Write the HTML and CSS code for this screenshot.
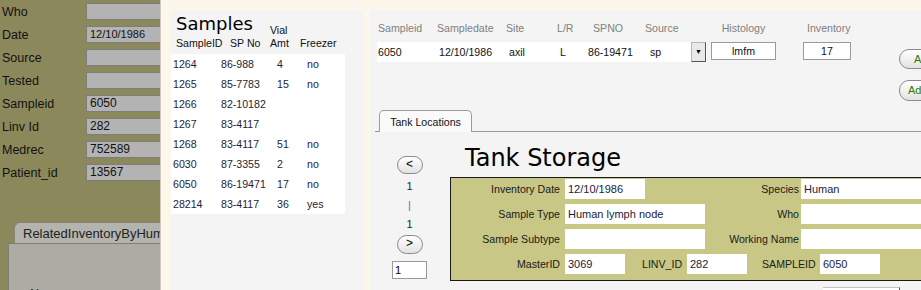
FILE: index.html
```html
<!DOCTYPE html>
<html lang="en">
<head>
    <meta charset="UTF-8">
    <title>Sample Inventory</title>
    <link rel="stylesheet" href="styles.css">
</head>
<body>

    <div class="left">
        <div class="left-form">
            <span class="lbl">Who</span><div class="fld"></div>
            <span class="lbl">Date</span><div class="fld small">12/10/1986</div>
            <span class="lbl">Source</span><div class="fld"></div>
            <span class="lbl">Tested</span><div class="fld"></div>
            <span class="lbl">Sampleid</span><div class="fld">6050</div>
            <span class="lbl">Linv Id</span><div class="fld">282</div>
            <span class="lbl">Medrec</span><div class="fld">752589</div>
            <span class="lbl">Patient_id</span><div class="fld">13567</div>
        </div>
        <div class="left-tab">RelatedInventoryByHumanID</div>
        <div class="left-tabpanel">Name</div>
    </div>

    <div class="main">
        <div class="samples">
            <div class="s-head">
                <div class="s-title">Samples</div>
                <div class="s-vial">Vial</div>
                <div class="s-col">SampleID</div>
                <div class="s-col">SP No</div>
                <div class="s-col">Amt</div>
                <div class="s-col">Freezer</div>
            </div>
            <div class="s-rows">
                <span>1264</span><span>86-988</span><span>4</span><span>no</span>
                <span>1265</span><span>85-7783</span><span>15</span><span>no</span>
                <span>1266</span><span>82-10182</span><span></span><span></span>
                <span>1267</span><span>83-4117</span><span></span><span></span>
                <span>1268</span><span>83-4117</span><span>51</span><span>no</span>
                <span>6030</span><span>87-3355</span><span>2</span><span>no</span>
                <span>6050</span><span>86-19471</span><span>17</span><span>no</span>
                <span>28214</span><span>83-4117</span><span>36</span><span>yes</span>
            </div>
        </div>

        <div class="right">
            <div class="rec-top">
                <div class="rec">
                    <div class="h p1">Sampleid</div>
                    <div class="h">Sampledate</div>
                    <div class="h">Site</div>
                    <div class="h p1">L/R</div>
                    <div class="h p5">SPNO</div>
                    <div class="h">Source</div>
                    <div class="h center">Histology</div>
                    <div></div>
                    <div class="h inv-h">Inventory</div>

                    <div class="cell p1">6050</div>
                    <div class="cell p2">12/10/1986</div>
                    <div class="cell p3">axil</div>
                    <div class="cell p4">L</div>
                    <div class="cell">86-19471</div>
                    <div class="cell src"><span class="p5">sp</span><span class="drop">&#9660;</span></div>
                    <div class="box histo">lmfm</div>
                    <div></div>
                    <div class="box">17</div>
                </div>
                <div class="btns">
                    <div class="pill add1">Add Sample</div>
                    <div class="pill add2">Add Inventory</div>
                </div>
            </div>

            <div class="tabs">
                <div class="tab">Tank Locations</div>
            </div>

            <div class="tank">
                <div class="nav">
                    <div class="pill nav-btn">&lt;</div>
                    <div class="nav-num first">1</div>
                    <div class="nav-num bar">|</div>
                    <div class="nav-num">1</div>
                    <div class="pill nav-btn next">&gt;</div>
                    <div class="nav-input">1</div>
                </div>
                <div class="tank-main">
                    <h1>Tank Storage</h1>
                    <div class="tank-box">
                        <span class="tl">Inventory Date</span>
                        <div class="tin w80">12/10/1986</div>
                        <span class="tl2">Species</span>
                        <div class="tin wide">Human</div>

                        <span class="tl">Sample Type</span>
                        <div class="tin">Human lymph node</div>
                        <span class="tl2">Who</span>
                        <div class="tin wide"></div>

                        <span class="tl">Sample Subtype</span>
                        <div class="tin"></div>
                        <span class="tl2">Working Name</span>
                        <div class="tin wide"></div>

                        <span class="tl">MasterID</span>
                        <div class="ids">
                            <div class="tin w60">3069</div>
                            <span class="id-lbl linv">LINV_ID</span>
                            <div class="tin w60">282</div>
                            <span class="id-lbl sid">SAMPLEID</span>
                            <div class="tin w60">6050</div>
                        </div>
                    </div>
                    <div class="stub"></div>
                </div>
            </div>
        </div>
    </div>

</body>
</html>
```

FILE: styles.css
```css
body {
    margin: 0;
    width: 921px;
    height: 290px;
    overflow: hidden;
    display: flex;
    background-color: #fdf6eb;
    font-family: "Liberation Sans", Arial, sans-serif;
}

/* left olive form */
.left {
    width: 160px;
    flex: none;
    background-color: #8b895b;
    border-right: 1px solid #cfcbc0;
    overflow: hidden;
}

.left-form {
    display: grid;
    grid-template-columns: 86px 80px;
    grid-auto-rows: 17px;
    row-gap: 6px;
    padding-top: 3px;
}

.lbl {
    font-size: 12.5px;
    line-height: 19px;
    color: #111;
    padding-left: 2px;
    white-space: nowrap;
}

.fld {
    height: 15px;
    background-color: #b3b3b3;
    border: 1px solid #7d7d7d;
    padding-left: 3px;
    font-size: 12px;
    line-height: 15px;
    color: #111;
}

.fld.small {
    font-size: 11px;
}

.left-tab {
    margin: 41px 0 0 14px;
    width: 180px;
    height: 20px;
    padding-left: 8px;
    background-color: #b4b4ae;
    border: 1px solid #85857a;
    border-right: none;
    border-bottom: none;
    border-top-left-radius: 6px;
    font-size: 13px;
    line-height: 21px;
    color: #222;
    white-space: nowrap;
}

.left-tabpanel {
    margin-left: 8px;
    height: 60px;
    background-color: #acaca5;
    border-left: 1px solid #7e7e72;
    border-top: 1px solid #7e7e72;
    padding: 43px 0 0 21px;
    font-size: 12.5px;
    color: #222;
}

/* main area */
.main {
    flex: 1;
    display: flex;
    padding: 10px 0 0 10px;
    min-width: 0;
}

.samples {
    width: 193px;
    flex: none;
    background-color: #f4f4f4;
}

.s-head {
    display: grid;
    grid-template-columns: 54px 40px 30px 1fr;
    grid-template-rows: 27px 13px;
    padding: 0 0 4px 5px;
    font-size: 10.6px;
    line-height: 13px;
    color: #111;
}

.s-title {
    grid-column: 1 / 3;
    grid-row: 1;
    align-self: end;
    margin-bottom: 3px;
    font-family: "DejaVu Sans", sans-serif;
    font-size: 18px;
    line-height: 20px;
    color: #000;
}

.s-vial {
    grid-column: 3;
    grid-row: 1;
    align-self: end;
}

.s-col {
    grid-row: 2;
    white-space: nowrap;
}

.s-rows {
    width: 172px;
    padding-left: 2px;
    background-color: #fff;
    display: grid;
    grid-template-columns: 48px 56px 30px 1fr;
    grid-auto-rows: 20px;
    font-size: 10.6px;
    line-height: 20px;
    color: #1e1e38;
}

.right {
    flex: 1;
    margin-left: 6px;
    min-width: 0;
    overflow: hidden;
    background-color: #f4f4f4;
}

/* record row */
.rec-top {
    display: flex;
    padding: 11px 0 0 7px;
}

.rec {
    display: grid;
    grid-template-columns: 60px 69px 50px 32px 57px 62px 69px 27px 48px;
    grid-template-rows: 14px 20px;
    row-gap: 7px;
    flex: none;
    font-size: 10.6px;
}

.h {
    line-height: 14px;
    color: #808080;
    white-space: nowrap;
}

.center { text-align: center; padding-left: 4px; }
.inv-h { padding-left: 4px; }

.p1 { padding-left: 1px; }
.p2 { padding-left: 2px; }
.p3 { padding-left: 3px; }
.p4 { padding-left: 4px; }
.p5 { padding-left: 5px; }

.cell {
    background-color: #fff;
    line-height: 20px;
    color: #111;
    white-space: nowrap;
}

.src {
    display: flex;
    justify-content: space-between;
}

.drop {
    width: 13px;
    height: 18px;
    margin-right: 1px;
    border: 1px solid #b5b5b5;
    border-right-color: #555;
    border-bottom-color: #555;
    background-color: #e9e9e9;
    font-size: 7px;
    line-height: 18px;
    text-align: center;
    color: #000;
}

.box {
    height: 16px;
    border: 1px solid #9a9a9a;
    background-color: #fff;
    text-align: center;
    line-height: 16px;
    color: #111;
}

.histo {
    margin-left: 4px;
}

.btns {
    margin-left: 48px;
    padding-top: 28px;
    display: flex;
    flex-direction: column;
    gap: 11px;
}

.pill {
    border: 1px solid #8a8a8a;
    border-radius: 10px;
    background: linear-gradient(#ffffff, #e2e2e2);
    font-size: 11px;
    white-space: nowrap;
}

.add1, .add2 {
    width: 70px;
    height: 18px;
    line-height: 18px;
    color: #2f7d00;
}

.add1 { padding-left: 14px; }
.add2 { padding-left: 8px; height: 19px; }

/* tab */
.tabs {
    margin: 9px 0 0 5px;
    padding-left: 4px;
    border-bottom: 1px solid #999;
    display: flex;
}

.tab {
    width: 91px;
    height: 21px;
    margin-bottom: -1px;
    border: 1px solid #9c9c9c;
    border-bottom: none;
    border-radius: 5px 5px 0 0;
    background-color: #fafafa;
    text-align: center;
    font-size: 10.6px;
    line-height: 22px;
    color: #111;
}

.tank {
    display: flex;
    padding-left: 22px;
}

.nav {
    width: 35px;
    flex: none;
    display: flex;
    flex-direction: column;
    align-items: center;
    padding-top: 24px;
    font-size: 11px;
    color: #1e1e38;
}

.nav-btn {
    width: 24px;
    height: 16px;
    line-height: 15px;
    text-align: center;
    color: #000;
    font-size: 12px;
}

.nav-btn.next {
    height: 17px;
    margin-top: 1px;
}

.nav-num {
    height: 19px;
    line-height: 19px;
}

.nav-num.first { margin-top: 3px; }

.nav-num.bar { color: #4a6fb0; }

.nav-input {
    align-self: stretch;
    margin-top: 7px;
    height: 16px;
    border: 1px solid #999;
    background-color: #fff;
    padding-left: 2px;
    line-height: 17px;
    color: #000;
}

.tank-main {
    margin-left: 23px;
}

.tank-main h1 {
    margin: 12px 0 0 15px;
    font-family: "DejaVu Sans", sans-serif;
    font-size: 24px;
    font-weight: normal;
    line-height: 28px;
    color: #000;
}

.tank-box {
    margin-top: 5px;
    width: 520px;
    display: grid;
    grid-template-columns: 114px 140px 96px 200px;
    grid-auto-rows: 20px;
    row-gap: 5px;
    padding: 1px 0 6px 0;
    border: 1px solid #1a1a1a;
    background-color: #c8c785;
    font-size: 10.6px;
}

.tl, .tl2 {
    text-align: right;
    line-height: 20px;
    color: #1a1a1a;
    white-space: nowrap;
}

.tl { padding-right: 5px; }
.tl2 { padding-right: 2px; }

.tin {
    background-color: #fff;
    padding-left: 3px;
    line-height: 20px;
    font-size: 11px;
    color: #1c1c38;
    white-space: nowrap;
    overflow: hidden;
}

.w80 { width: 77px; }
.w60 { width: 57px; flex: none; }

.ids {
    grid-column: 2 / 5;
    display: flex;
}

.id-lbl {
    line-height: 20px;
    color: #1a1a1a;
    flex: none;
}

.linv { width: 45px; margin-left: 17px; }
.sid { width: 58px; margin-left: 15px; }

.stub {
    margin: 6px 0 0 373px;
    width: 76px;
    height: 10px;
    background-color: #fff;
    border-top: 1px solid #c4c4c4;
    border-right: 1px solid #555;
}
```
